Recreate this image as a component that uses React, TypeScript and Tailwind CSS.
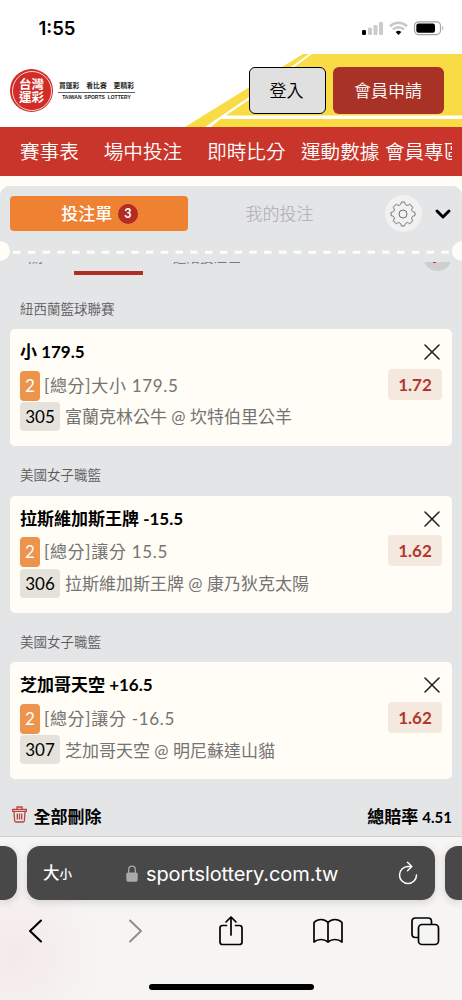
import React from 'react';
import { ChevronDown, X } from 'lucide-react';

interface Bet {
  league: string;
  pick: string;
  market: string;
  code: string;
  match: string;
  odds: string;
}

const BETS: Bet[] = [
  { league: '紐西蘭籃球聯賽', pick: '小 179.5', market: '[總分]大小 179.5', code: '305', match: '富蘭克林公牛 @ 坎特伯里公羊', odds: '1.72' },
  { league: '美國女子職籃', pick: '拉斯維加斯王牌 -15.5', market: '[總分]讓分 15.5', code: '306', match: '拉斯維加斯王牌 @ 康乃狄克太陽', odds: '1.62' },
  { league: '美國女子職籃', pick: '芝加哥天空 +16.5', market: '[總分]讓分 -16.5', code: '307', match: '芝加哥天空 @ 明尼蘇達山貓', odds: '1.62' },
];

const StatusBar = () => (
  <div className="h-[54px] shrink-0 flex items-start justify-between pl-[38.500px] pr-[17px] pt-[18px]">
    <span className="font-['Inter',sans-serif] font-semibold text-[18.500px] leading-5 text-black">1:55</span>
    <svg width="84" height="16" viewBox="0 0 84 16" className="mt-[2px]">
      <rect x="1" y="10" width="4" height="5" rx="1.2" fill="#000" />
      <rect x="7" y="7.5" width="4" height="7.5" rx="1.2" fill="#cbcbcb" />
      <rect x="12.500" y="5" width="4" height="10" rx="1.2" fill="#cbcbcb" />
      <rect x="18" y="2" width="4" height="13" rx="1.2" fill="#cbcbcb" />
      <g fill="none" stroke="#c8c8c8" strokeWidth="2.6">
        <path d="M29 6.200a12.200 12.200 0 0 1 17 0" />
        <path d="M32 9.400a8 8 0 0 1 11 0" />
      </g>
      <path d="M34.700 12a4.200 4.200 0 0 1 5.600 0l-2.800 3z" fill="#000" />
      <rect x="53.500" y="1.800" width="26" height="12.800" rx="4" fill="none" stroke="#a5a5a5" strokeWidth="1.200" />
      <rect x="55.300" y="3.600" width="18.700" height="9.200" rx="2.200" fill="#000" />
      <path d="M81.300 6v4.400c1.400-.6 1.400-3.800 0-4.400z" fill="#a5a5a5" />
    </svg>
  </div>
);

const Logo = () => (
  <div className="flex items-center">
    <div className="w-[43px] h-[43px] rounded-full bg-[#d12c27] p-[1.5px]">
      <div className="w-full h-full rounded-full border border-white/80 flex flex-col items-center justify-center text-white text-[12.5px] leading-[13px] font-bold">
        <span>台灣</span>
        <span>運彩</span>
      </div>
    </div>
    <div className="ml-[5px] w-[77px] text-center text-[#222]">
      <div className="flex justify-between px-px pb-[2px] border-b border-[#666] text-[6.8px] leading-[10px] font-bold">
        <span>買運彩</span>
        <span>看比賽</span>
        <span>更精彩</span>
      </div>
      <p className="font-['Liberation_Sans',sans-serif] font-bold text-[5px] leading-[9px] whitespace-nowrap">TAIWAN&nbsp; SPORTS&nbsp; LOTTERY</p>
    </div>
  </div>
);

const Header = () => (
  <header className="relative h-[73px] shrink-0 bg-white flex items-center justify-between pl-[10px] pr-[18px]">
    <svg className="absolute inset-0" width="462" height="73" viewBox="0 0 462 73">
      <path d="M185 73L303 0h159v73z" fill="#f9dc45" />
      <path d="M205 73L248 43.700 309 0h3L248 46.500 225.700 61.500H462V65H220.500L211 73z" fill="#fff" />
    </svg>
    <div className="relative">
      <Logo />
    </div>
    <div className="relative flex gap-[7px]">
      <button className="w-[77px] h-[47px] rounded-[6px] border border-black bg-[#e0e0e0] text-[17px] font-[350] text-black pr-[2px]">登入</button>
      <button className="w-[111px] h-[47px] rounded-[6px] bg-[#a83226] text-[17px] font-[350] text-white pr-px">會員申請</button>
    </div>
  </header>
);

const NavBar = () => (
  <nav className="h-[49px] shrink-0 bg-[#c9342b] px-5 pr-[10px] text-white text-[19.6px] leading-[49px] font-[350]">
    <div className="flex overflow-hidden whitespace-nowrap">
      <span className="mr-[25px]">賽事表</span>
      <span className="mr-[25px]">場中投注</span>
      <span className="mr-[15.500px]">即時比分</span>
      <span className="mr-[5.500px]">運動數據</span>
      <span>會員專區</span>
    </div>
  </nav>
);

const GearIcon = () => (
  <svg width="26" height="26" viewBox="0 0 26 26" fill="none" stroke="#6f6f6f" strokeWidth="1">
    <circle cx="13" cy="13" r="4" />
    <path strokeLinejoin="round" d="M11.300 1.200Q13 .6 14.700 1.200C15.200 4.400 16.900 5.200 19.500 3.300Q21.700 4.300 22.700 6.500C20.800 9.100 21.600 10.800 24.800 11.300Q25.400 13 24.800 14.700C21.600 15.200 20.800 16.900 22.700 19.500Q21.700 21.700 19.500 22.700C16.900 20.800 15.200 21.600 14.700 24.800Q13 25.400 11.300 24.800C10.800 21.600 9.100 20.800 6.500 22.700Q4.300 21.700 3.300 19.500C5.200 16.900 4.400 15.200 1.200 14.700Q.6 13 1.200 11.300C4.400 10.800 5.200 9.100 3.300 6.500Q4.300 4.300 6.500 3.300C9.100 5.200 10.800 4.400 11.300 1.200z" />
  </svg>
);

const SlipTabs = () => (
  <div className="h-[76px] shrink-0 rounded-t-[10px] bg-[#e4e5e7] relative">
    <div className="flex items-center pt-[9px] pl-[10px]">
      <button className="w-[178px] shrink-0 h-[35px] rounded-[4px] bg-[#ee8132] text-white text-[17px] font-medium flex items-center justify-center gap-[5.500px] pl-px">
        投注單
        <span className="w-5 h-5 rounded-full bg-[#b12c22] text-[12.500px] leading-5 font-bold">3</span>
      </button>
      <button className="w-[183px] shrink-0 text-[17px] font-[350] text-[#b5b6b7]">我的投注</button>
      <span className="ml-[13.500px] shrink-0 w-[37px] h-[37px] rounded-full bg-[#f1f1f1] flex items-center justify-center">
        <GearIcon />
      </span>
      <ChevronDown size={24} strokeWidth={3} className="ml-[9.500px] mt-px shrink-0 text-black" />
    </div>
    {/* ticket perforation */}
    <svg className="absolute left-0 top-[53.500px]" width="462" height="22" viewBox="0 0 462 22">
      <circle cx="0" cy="11" r="10" fill="#fffdf5" />
      <circle cx="462" cy="11" r="10" fill="#fffdf5" />
      <path d="M13 12.200H450" stroke="#fffdf5" strokeWidth="3" strokeDasharray="7.500 7.270" />
    </svg>
  </div>
);

const BetTypes = () => (
  <div className="h-[23px] shrink-0 overflow-hidden relative text-[#777] text-[15px] leading-4">
    <span className="absolute left-[28px] -top-[14px]">關</span>
    <span className="absolute left-[173px] -top-[13px] text-[13.500px]">進階投注區</span>
    <span className="absolute left-[74px] top-[9px] w-[69px] h-[3.500px] bg-[#b12c22]"></span>
    <span className="absolute left-[423px] -top-[20.500px] w-[29px] h-[29px] rounded-full bg-[#cfcfcf]"></span>
    <span className="absolute left-[433px] top-0 w-[3px] h-px bg-[#c9342b]"></span>
  </div>
);

const BetCard: React.FC<{ bet: Bet }> = ({ bet }) => (
  <section className="h-[166.600px] px-[10px] shrink-0">
    <h3 className="h-[49.600px] pl-[10px] pt-[19px] text-[13.500px] leading-5 font-[350] text-[#5c5c5c]">{bet.league}</h3>
    <div className="h-[117px] rounded-[5px] bg-[#fffdf5] px-[10px] pt-[7px]">
      <div className="h-[32px] flex items-center justify-between">
        <p className="text-[17px] leading-[30px] font-bold text-black">{bet.pick}</p>
        <X size={28} strokeWidth={1.300} className="text-[#222] -mr-[4px]" />
      </div>
      <div className="h-[32px] flex items-center">
        <span className="w-[20px] h-[30px] mt-[3px] rounded-[4px] bg-[#ec944b] text-white text-[17px] leading-[30px] text-center">2</span>
        <span className="ml-[4px] mt-[3px] text-[17px] tracking-[0.700px] text-[#747474]">{bet.market}</span>
        <span className="ml-auto w-[54px] h-[31px] rounded-[4px] bg-[#f5e8df] text-[#b0382b] text-[17px] leading-[31px] font-bold text-center">{bet.odds}</span>
      </div>
      <div className="h-[30px] mt-[1.500px] flex items-center">
        <span className="w-[40px] h-[29px] rounded-[4px] bg-[#e5e2db] text-black text-[17px] leading-[29px] text-center">{bet.code}</span>
        <span className="ml-[5px] mt-px text-[17px] text-[#747474]">{bet.match}</span>
      </div>
    </div>
  </section>
);

const TrashIcon = () => (
  <svg width="15" height="17" viewBox="0 0 15 17" fill="none" stroke="#b8443c" strokeWidth="1.300" className="-mt-[3px]">
    <path d="M.7 3.300h13.600v2H.7zM5 3V1h5v2M2 5.500l.6 9.300q.1 1.200 1.300 1.200h7.200q1.200 0 1.300-1.200L13 5.500M5.300 7.500v6M7.500 7.500v6M9.700 7.500v6" />
  </svg>
);

const Summary = () => (
  <div className="h-[74px] shrink-0 flex items-center justify-between pl-3 pr-[10px] text-[17px] font-bold text-black">
    <button className="flex items-center gap-[6.500px]">
      <TrashIcon />
      全部刪除
    </button>
    <span>總賠率 <span className="text-[15px]">4.51</span></span>
  </div>
);

const BrowserBar = () => (
  <footer className="flex-1 border-t border-[#d2d2d3] bg-[radial-gradient(circle_at_15px_118px,#f5e9e9_0,#f6f5f4_90px)] overflow-hidden">
    <div className="mt-[9px] flex gap-[10px] h-[54px] text-white">
      <div className="w-[17px] shrink-0 bg-[#484848] rounded-r-[13px] shadow-[0_2px_8px_rgba(0,0,0,0.15)]"></div>
      <div className="w-[408px] shrink-0 bg-[#484848] rounded-[13px] shadow-[0_2px_8px_rgba(0,0,0,0.15)] flex items-center pl-4 pr-[17px]">
        <span className="text-[16.500px] font-medium">大<span className="text-[12.500px]">小</span></span>
        <svg className="ml-[54px]" width="12" height="17" viewBox="0 0 12 17">
          <path d="M2.700 8V4.500a3.300 3.300 0 0 1 6.600 0V8" fill="none" stroke="#a9a9ae" strokeWidth="1.300" />
          <rect x="0.300" y="7.500" width="11.400" height="9.300" rx="1.800" fill="#a9a9ae" />
        </svg>
        <span className="ml-[8px] mt-px font-['Inter',sans-serif] text-[20px] tracking-[-0.100px]">sportslottery.com.tw</span>
        <svg className="ml-auto" width="20" height="24" viewBox="0 0 20 24" fill="none" stroke="#fff" strokeWidth="1.500" strokeLinecap="round" strokeLinejoin="round">
          <path d="M13.500 5.500H10A8.500 8.500 0 1 0 18.500 14M9.500 1.300L13.800 5.500 9.500 9.700" />
        </svg>
      </div>
      <div className="w-[17px] shrink-0 bg-[#484848] rounded-l-[13px] shadow-[0_2px_8px_rgba(0,0,0,0.15)]"></div>
    </div>
    <div className="h-[62px] pl-[28px] flex items-center text-black">
      <svg width="15" height="24" viewBox="0 0 15 24" fill="none" stroke="currentColor" strokeWidth="2.100" strokeLinecap="round" strokeLinejoin="round">
        <path d="M13 1.500L2 12l11 10.500" />
      </svg>
      <svg className="ml-[85px]" width="15" height="24" viewBox="0 0 15 24" fill="none" stroke="#8c8c8c" strokeWidth="1.900" strokeLinecap="round" strokeLinejoin="round">
        <path d="M2 1.500L13 12 2 22.500" />
      </svg>
      <svg className="ml-[75px]" width="26" height="32" viewBox="0 0 26 32" fill="none" stroke="currentColor" strokeWidth="1.700" strokeLinecap="round" strokeLinejoin="round">
        <path d="M8.500 10.500H4.500Q2 10.500 2 13v14Q2 29.500 4.500 29.500h17q2.500 0 2.500-2.500V13Q24 10.500 21.500 10.500h-4M13 20V2M8 7L13 2l5 5" />
      </svg>
      <svg className="ml-[68px]" width="32" height="26" viewBox="0 0 32 26" fill="none" stroke="currentColor" strokeWidth="1.700" strokeLinejoin="round">
        <path d="M16 4.500Q13 1.500 9 1.500T2 4.500V24q3-2.500 7-2.500t7 2.500q3-2.500 7-2.500t7 2.500V4.500q-3-3-7-3t-7 3zV24" />
      </svg>
      <svg className="ml-[66px]" width="30" height="30" viewBox="0 0 30 30" fill="none" stroke="currentColor" strokeWidth="1.700" strokeLinejoin="round">
        <rect x="8.500" y="8.500" width="20" height="20" rx="3.500" />
        <path d="M8.500 21.500h-3Q2 21.500 2 18V5.500Q2 2 5.500 2H18q3.500 0 3.500 3.500v3" />
      </svg>
    </div>
    <div className="mx-auto mt-[22px] w-[165px] h-[6px] rounded-full bg-black"></div>
  </footer>
);

export default function App() {
  return (
    <div className="w-[462px] h-[1000px] overflow-hidden flex flex-col bg-[#fffdf5] font-['Lato','Noto_Sans_CJK_TC',sans-serif]">
      <div className="bg-white"><StatusBar /></div>
      <Header />
      <NavBar />
      <main className="mt-[10px] flex flex-col bg-[#e4e5e7] rounded-t-[10px] h-[650px] shrink-0">
        <SlipTabs />
        <BetTypes />
        <div className="-mt-[5.500px] flex flex-col">
          {BETS.map((bet, i) => <BetCard key={i} bet={bet} />)}
        </div>
        <Summary />
      </main>
      <BrowserBar />
    </div>
  );
}
